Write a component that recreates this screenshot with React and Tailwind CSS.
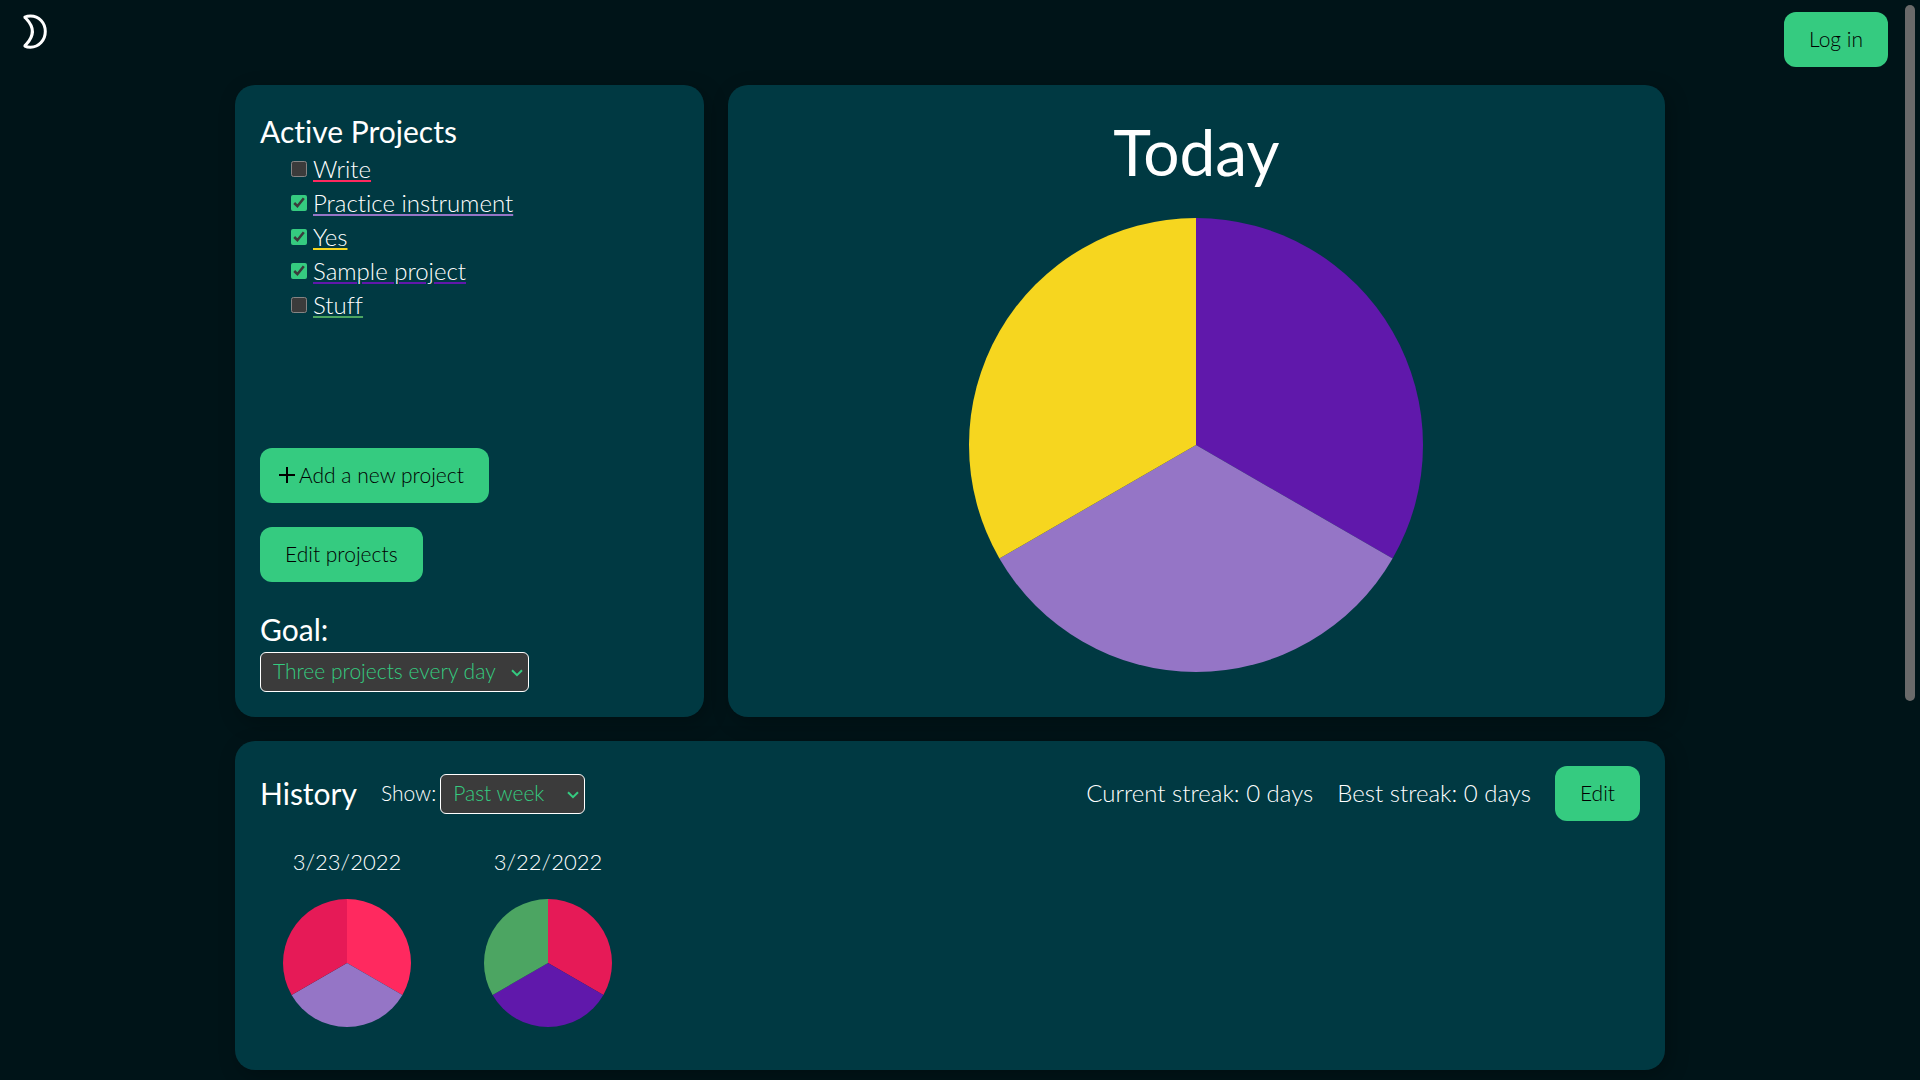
import React, { useState } from "react";

const PROJECTS = [
  { name: "Write", color: "decoration-[#ff295f]", done: false },
  { name: "Practice instrument", color: "decoration-[#9575c6]", done: true },
  { name: "Yes", color: "decoration-[#f6d61f]", done: true },
  { name: "Sample project", color: "decoration-[#6018ab]", done: true },
  { name: "Stuff", color: "decoration-[#4ca562]", done: false },
];

const TODAY = ["#6018ab", "#9575c6", "#f6d61f"];

const HISTORY = [
  { date: "3/23/2022", colors: ["#ff295f", "#9575c6", "#e61a57"] },
  { date: "3/22/2022", colors: ["#e61a57", "#6018ab", "#4ca562"] },
];

// Equal slices, clockwise from twelve o'clock
const Pie = ({ colors, label, className }) => {
  const point = (i) => {
    const angle = (i / colors.length) * Math.PI * 2;
    return `${Math.sin(angle) * 100} ${-Math.cos(angle) * 100}`;
  };

  return (
    <svg viewBox="-100 -100 200 200" role="img" aria-label={label} className={className}>
      {colors.map((color, i) => (
        <path
          key={i}
          d={`M0 0 L${point(i)} A100 100 0 0 1 ${point(i + 1)} Z`}
          fill={color}
        />
      ))}
    </svg>
  );
};

const Button = ({ children, className = "px-[25px]" }) => (
  <button
    type="button"
    className={`flex h-[55px] items-center rounded-xl bg-[#35cb80] pb-[2px] text-[21px] whitespace-nowrap text-black hover:bg-[#2fb974] ${className}`}
  >
    {children}
  </button>
);

const Card = ({ children, className }) => (
  <section
    className={`rounded-[20px] bg-[#003942] p-[25px] shadow-[4px_6px_20px_rgba(0,0,0,0.25)] ${className}`}
  >
    {children}
  </section>
);

const Select = ({ id, options, className }) => (
  <div className={`relative ${className}`}>
    <select
      id={id}
      className="block h-10 w-full appearance-none rounded-md border border-white bg-[#3b3b3b] pb-[2px] pl-3 text-[21px] text-[#35cb80]"
    >
      {options.map((option) => (
        <option key={option}>{option}</option>
      ))}
    </select>
    <svg
      viewBox="0 0 12 8"
      className="pointer-events-none absolute top-[17px] right-[6px] h-2 w-3"
      fill="none"
      stroke="#35cb80"
      strokeWidth="2"
      aria-hidden="true"
    >
      <path d="M1 1.200L6 6.200L11 1.200" />
    </svg>
  </div>
);

const ProjectItem = ({ name, color, done }) => {
  const [checked, setChecked] = useState(done);

  return (
    <li className="h-[34px]">
      <label className="flex items-center gap-[6px]">
        <input
          type="checkbox"
          checked={checked}
          onChange={() => setChecked(!checked)}
          className="size-4 accent-[#35cb80]"
        />
        <span className={`underline decoration-2 underline-offset-2 ${color}`}>{name}</span>
      </label>
    </li>
  );
};

export default function App() {
  return (
    <div className="flex h-screen overflow-hidden bg-[#001418] font-['Lato',sans-serif] text-2xl leading-[34px] font-light text-white [color-scheme:dark] [font-variant-ligatures:none]">
      <div className="min-w-0 flex-1">
        <header className="flex h-[85px] items-start justify-between pt-3 pr-3 pl-[22px]">
          <button type="button" aria-label="Toggle dark mode">
            <svg viewBox="0 0 26 38" className="h-[38px] w-[26px]" fill="none" stroke="white" strokeWidth="3" strokeLinejoin="round">
              <path d="M3 5C4.500 4.300 6.500 4 8.500 4C17 4 23.300 11 23.300 19.500C23.300 28 17 35.200 8.500 35.200C6.500 35.200 4.500 35 3 34.200C2.500 33.800 3.500 33.300 4.500 32C12.500 23.500 12.500 15.500 4.500 7C3.500 5.800 2.500 5.400 3 5Z" />
            </svg>
          </button>
          <Button>Log in</Button>
        </header>

        <main className="mx-auto flex max-w-[1430px] flex-col gap-6">
          <div className="grid grid-cols-[1fr_2fr] gap-6">
            <Card className="flex flex-col items-start">
              <h2 className="text-[30px] leading-[42px] font-normal">Active Projects</h2>
              <ul className="pl-[31px]">
                {PROJECTS.map((project) => (
                  <ProjectItem key={project.name} {...project} />
                ))}
              </ul>

              <div className="mt-auto flex flex-col items-start gap-6">
                <Button className="pr-[25px] pl-[18px]">
                  <svg viewBox="0 0 18 18" className="mr-[3px] size-[18px]" stroke="black" strokeWidth="2" aria-hidden="true">
                    <path d="M9 1V17M1 9H17" />
                  </svg>
                  Add a new project
                </Button>
                <Button>Edit projects</Button>
                <div className="flex flex-col items-start">
                  <label htmlFor="goal" className="pt-1 pb-1 text-[30px] leading-[38px] font-normal">
                    Goal:
                  </label>
                  <Select
                    id="goal"
                    options={["Three projects every day", "Two projects every day", "One project every day"]}
                    className="w-[269px]"
                  />
                </div>
              </div>
            </Card>

            <Card className="flex flex-col items-center">
              <h1 className="pt-1 text-[64px] leading-[76px] font-normal">Today</h1>
              <Pie colors={TODAY} label="Projects done today" className="mt-7 mb-5 size-[454px]" />
            </Card>
          </div>

          <Card className="min-h-[329px]">
            <div className="flex items-center">
              <h2 className="pb-[2px] text-[30px] leading-[38px] font-normal">History</h2>
              <label htmlFor="range" className="mr-1 ml-6 pb-[2px] text-[21px]">
                Show:
              </label>
              <Select id="range" options={["Past week", "Past month", "All time"]} className="w-[145px]" />
              <div className="ml-auto flex items-center gap-6">
                <p className="pb-[2px]">Current streak: 0 days</p>
                <p className="pb-[2px]">Best streak: 0 days</p>
                <Button>Edit</Button>
              </div>
            </div>

            <ul className="flex gap-[27px] pt-6">
              {HISTORY.map(({ date, colors }) => (
                <li key={date} className="flex w-[174px] flex-col items-center gap-5 text-[22px]">
                  <p>{date}</p>
                  <Pie colors={colors} label={`Projects done on ${date}`} className="size-32" />
                </li>
              ))}
            </ul>
          </Card>
        </main>
      </div>

      {/* Scrollbar */}
      <div className="w-5 p-[5px]" aria-hidden="true">
        <div className="h-[65%] rounded-full bg-[#6a6a6a]" />
      </div>
    </div>
  );
}
